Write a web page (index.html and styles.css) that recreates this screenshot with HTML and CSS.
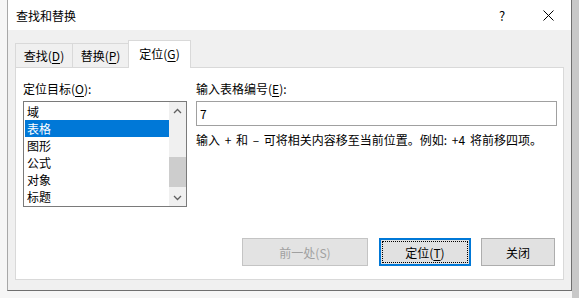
FILE: index.html
```html
<!DOCTYPE html>
<html>
<head>
  <meta charset="utf-8">
  <title>查找和替换</title>
  <link rel="stylesheet" href="styles.css">
</head>
<body>
  <div class="dialog">
    <div class="title-bar">
      <span class="title">查找和替换</span>
      <span class="title-btn">?</span>
      <span class="title-btn">
        <svg width="11" height="11" viewBox="0 0 11 11"><path d="M0.5 0.5 L10.5 10.5 M10.5 0.5 L0.5 10.5" stroke="#000" stroke-width="1" fill="none"/></svg>
      </span>
    </div>
    <div class="dialog-body">
      <div class="tabs">
        <div class="tab tab-find">查找(<u>D</u>)</div>
        <div class="tab tab-replace">替换(<u>P</u>)</div>
        <div class="tab active">定位(<u>G</u>)</div>
      </div>
      <div class="panel">
        <div class="fields">
          <div class="col">
            <div class="label">定位目标(<u>O</u>):</div>
            <div class="listbox">
              <div class="items">
                <div class="item">域</div>
                <div class="item selected">表格</div>
                <div class="item">图形</div>
                <div class="item">公式</div>
                <div class="item">对象</div>
                <div class="item">标题</div>
              </div>
              <div class="scrollbar">
                <div class="arrow">
                  <svg width="9" height="6" viewBox="0 0 9 6"><polyline points="1,5 4.5,1.5 8,5" stroke="#606060" stroke-width="1.3" fill="none"/></svg>
                </div>
                <div class="track"><div class="thumb"></div></div>
                <div class="arrow">
                  <svg width="9" height="6" viewBox="0 0 9 6"><polyline points="1,1 4.5,4.5 8,1" stroke="#606060" stroke-width="1.3" fill="none"/></svg>
                </div>
              </div>
            </div>
          </div>
          <div class="col">
            <div class="label">输入表格编号(<u>E</u>):</div>
            <div class="input">7</div>
            <div class="hint">输入 + 和 – 可将相关内容移至当前位置。例如: +4 将前移四项。</div>
          </div>
        </div>
        <div class="buttons">
          <div class="button disabled btn-prev">前一处(S)</div>
          <div class="button focused btn-goto">定位(<u>T</u>)</div>
          <div class="button btn-close">关闭</div>
        </div>
      </div>
    </div>
  </div>
</body>
</html>
```

FILE: styles.css
```css
html, body {
  margin: 0;
  height: 298px;
  overflow: hidden;
}

body {
  font-family: "Noto Sans CJK SC", "Noto Sans", sans-serif;
  font-size: 12px;
  color: #000;
  background: linear-gradient(to right, #f6f6f6 0, #f6f6f6 572px, #c8c8c8 572px);
}

u {
  text-decoration: underline;
  text-underline-offset: 2px;
}

.dialog {
  box-sizing: border-box;
  margin-left: 7px;
  width: 565px;
  height: 291px;
  border: 1px solid #6f6f6f;
  border-top: none;
  border-left-color: #a8a8a8;
  background-color: #f0f0f0;
  display: flex;
  flex-direction: column;
}

.title-bar {
  height: 30px;
  background-color: #fff;
  display: flex;
  align-items: center;
  padding-left: 8px;
}

.title {
  flex: 1;
  font-size: 12px;
}

.title-btn {
  width: 46px;
  height: 30px;
  display: flex;
  align-items: center;
  justify-content: center;
  font-size: 13px;
}

.dialog-body {
  flex: 1;
  padding: 10px 7px 11px 7px;
  display: flex;
  flex-direction: column;
}

.tabs {
  display: flex;
  align-items: flex-end;
  height: 28px;
  margin-bottom: -1px;
  position: relative;
  z-index: 1;
}

.tab {
  box-sizing: border-box;
  height: 24px;
  margin-bottom: 1px;
  border: 1px solid #d9d9d9;
  border-right: none;
  border-bottom: none;
  display: flex;
  align-items: center;
  justify-content: center;
  background-color: #f0f0f0;
}

.tab-find {
  width: 57px;
}

.tab-replace {
  width: 56px;
}

.tab.active {
  width: 63px;
  height: 28px;
  margin-bottom: 0;
  background-color: #fff;
  border-right: 1px solid #d9d9d9;
  padding-bottom: 2px;
}

.panel {
  box-sizing: border-box;
  height: 213px;
  background-color: #fff;
  border: 1px solid #d9d9d9;
  padding: 12px 5px 13px 7px;
  display: flex;
  flex-direction: column;
}

.fields {
  display: grid;
  grid-template-columns: 164px 361px;
  column-gap: 9px;
}

.label {
  line-height: 17px;
  height: 17px;
  margin-bottom: 4px;
}

.listbox {
  box-sizing: border-box;
  height: 106px;
  border: 1px solid #7a7a7a;
  display: flex;
}

.items {
  flex: 1;
  padding: 1px 0 0 1px;
}

.item {
  height: 17px;
  line-height: 17px;
  padding-left: 2px;
}

.item.selected {
  background-color: #0078d7;
  color: #fff;
}

.scrollbar {
  width: 17px;
  background-color: #f0f0f0;
  display: flex;
  flex-direction: column;
}

.arrow {
  height: 17px;
  display: flex;
  align-items: center;
  justify-content: center;
}

.track {
  flex: 1;
}

.thumb {
  margin-top: 38px;
  height: 30px;
  background-color: #cdcdcd;
}

.input {
  box-sizing: border-box;
  height: 25px;
  border: 1px solid #a0a0a0;
  line-height: 23px;
  padding-left: 3px;
}

.hint {
  margin-top: 5px;
  line-height: 17px;
  word-spacing: 2px;
}

.buttons {
  margin-top: auto;
  margin-right: 3px;
  display: flex;
  justify-content: flex-end;
  gap: 10px;
}

.button {
  box-sizing: border-box;
  height: 28px;
  border: 1px solid #adadad;
  background-color: #e1e1e1;
  display: flex;
  align-items: center;
  justify-content: center;
}

.btn-prev {
  width: 126px;
  margin-right: 1px;
}

.btn-goto {
  width: 92px;
}

.btn-close {
  width: 74px;
}

.button.disabled {
  background-color: #e3e3e3;
  border-color: #c4c4c4;
  color: #a0a0a0;
}

.button.focused {
  border: 2px solid #0078d7;
  outline: 1px dotted #000;
  outline-offset: -4px;
}
```
